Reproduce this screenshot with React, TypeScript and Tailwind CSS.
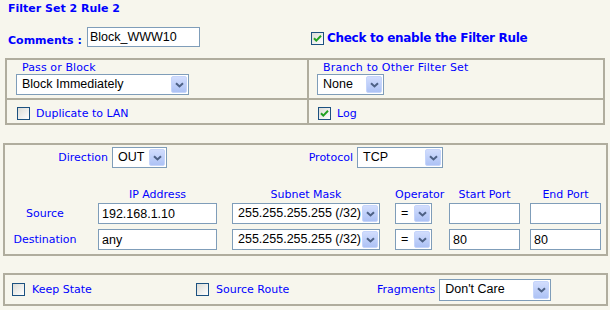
import React from "react";

const label = "text-[11px] leading-[13px] text-[#0000ff] whitespace-nowrap";
const field = "font-['Liberation_Sans',Arial,sans-serif] text-[12.5px] text-black";

const Arrow = () => (
    <div className="flex h-full w-[16px] shrink-0 items-center justify-center rounded-[2px] border border-[#c6d5fb] bg-gradient-to-b from-[#d2ddfd] to-[#adc2f5]">
        <svg width="9" height="6" viewBox="0 0 9 6">
            <path d="M1 1.2 L4.5 4.5 L8 1.2" fill="none" stroke="#4d6185" strokeWidth="2"/>
        </svg>
    </div>
)

const Select = ({value, w, h = "h-[21px]"}: { value: string, w: string, h?: string }) => (
    <div className={`${w} ${h} ${field} flex shrink-0 items-stretch border border-[#7f9db9] bg-white p-[1px]`}>
        <span className="flex flex-1 items-center overflow-hidden whitespace-nowrap pl-[4px]">{value}</span>
        <Arrow/>
    </div>
)

const Input = ({value, w}: { value: string, w: string }) => (
    <input readOnly defaultValue={value}
           className={`${w} ${field} block h-[21px] shrink-0 border border-[#7f9db9] bg-white px-[3px] outline-none`}/>
)

const Check = ({checked}: { checked?: boolean }) => (
    <div className="flex h-[13px] w-[13px] shrink-0 items-center justify-center border border-[#1c5180] bg-gradient-to-br from-[#dcdcd6] to-white">
        {checked && (
            <svg width="9" height="9" viewBox="0 0 9 9">
                <path d="M1 4.2 L3.3 6.6 L8 1.8" fill="none" stroke="#21a121" strokeWidth="2"/>
            </svg>
        )}
    </div>
)

export default function App() {
    return (
        <div className="h-[310px] w-[610px] overflow-hidden bg-[#f7f6ed] font-['DejaVu_Sans',Verdana,sans-serif]">
            <h3 className="pl-[8px] pt-[2px] text-[11px] font-bold leading-[13px] text-[#0000ff]">Filter Set 2 Rule 2</h3>

            <div className="mt-[12px] flex h-[20px] items-start">
                <div className="flex w-[303px] items-start pl-[8px]">
                    <span className={`${label} mt-[7px] font-bold`}>Comments :</span>
                    <input readOnly defaultValue="Block_WWW10"
                           className={`${field} ml-[5px] block h-[20px] w-[113px] border border-[#7f9db9] bg-white px-[2px] outline-none`}/>
                </div>
                <div className="mt-[5px] flex items-center gap-[3px] pl-[8px]">
                    <Check checked/>
                    <span className={`${label} text-[12px] font-bold tracking-[-0.3px]`}>Check to enable the Filter Rule</span>
                </div>
            </div>

            <div className="ml-[5px] mt-[11px] w-[600px] border-2 border-[#b0ad9e]">
                <div className="flex h-[40px] border-b-2 border-[#b0ad9e]">
                    <div className="w-[302px] border-r-2 border-[#b0ad9e] pl-[9px] pt-[1px]">
                        <p className={`${label} ml-[6px] tracking-[0.1px]`}>Pass or Block</p>
                        <Select value="Block Immediately" w="w-[173px]"/>
                    </div>
                    <div className="flex-1 pl-[8px] pt-[1px]">
                        <p className={`${label} ml-[6px] tracking-[0.2px]`}>Branch to Other Filter Set</p>
                        <Select value="None" w="w-[67px]"/>
                    </div>
                </div>
                <div className="flex h-[23px]">
                    <div className="flex w-[302px] items-center gap-[6px] border-r-2 border-[#b0ad9e] pl-[10px] pt-[3px]">
                        <Check/>
                        <span className={label}>Duplicate to LAN</span>
                    </div>
                    <div className="flex flex-1 items-center gap-[6px] pl-[9px] pt-[3px]">
                        <Check checked/>
                        <span className={label}>Log</span>
                    </div>
                </div>
            </div>

            <div className="ml-[3px] mt-[18px] w-[605px] border-2 border-[#b0ad9e] pb-[4px] pt-[2px]">
                <div className="flex items-center">
                    <span className={`${label} w-[103px] text-right`}>Direction</span>
                    <div className="ml-[4px]"><Select value="OUT" w="w-[55px]"/></div>
                    <span className={`${label} w-[186px] text-right`}>Protocol</span>
                    <div className="ml-[4px]"><Select value="TCP" w="w-[86px]"/></div>
                </div>

                <div className={`${label} mt-[20px] flex`}>
                    <span className="w-[80px]"/>
                    <span className="ml-[13px] w-[119px] text-center">IP Address</span>
                    <span className="ml-[15px] w-[148px] text-center">Subnet Mask</span>
                    <span className="ml-[15px] w-[37px] text-center">Operator</span>
                    <span className="ml-[17px] w-[71px] text-center">Start Port</span>
                    <span className="ml-[10px] w-[71px] text-center">End Port</span>
                </div>

                {[
                    {name: "Source", ip: "192.168.1.10", start: "", end: ""},
                    {name: "Destination", ip: "any", start: "80", end: "80"},
                ].map((r, i) => (
                    <div key={r.name} className={`flex items-center ${i === 0 ? "mt-[2px]" : "mt-[5px]"}`}>
                        <span className={`${label} w-[80px] text-center`}>{r.name}</span>
                        <div className="ml-[13px]"><Input value={r.ip} w="w-[119px]"/></div>
                        <div className="ml-[15px]"><Select value="255.255.255.255 (/32)" w="w-[148px]"/></div>
                        <div className="ml-[15px]"><Select value="=" w="w-[37px]"/></div>
                        <div className="ml-[17px]"><Input value={r.start} w="w-[71px]"/></div>
                        <div className="ml-[10px]"><Input value={r.end} w="w-[71px]"/></div>
                    </div>
                ))}
            </div>

            <div className="ml-[3px] mt-[17px] flex h-[33px] w-[605px] items-center border-2 border-[#b0ad9e] pl-[7px]">
                <div className="flex w-[184px] items-center gap-[7px]">
                    <Check/>
                    <span className={label}>Keep State</span>
                </div>
                <div className="flex w-[181px] items-center gap-[7px]">
                    <Check/>
                    <span className={label}>Source Route</span>
                </div>
                <span className={label}>Fragments</span>
                <div className="ml-[4px]"><Select value="Don't Care" w="w-[112px]" h="h-[22px]"/></div>
            </div>
        </div>
    )
}
